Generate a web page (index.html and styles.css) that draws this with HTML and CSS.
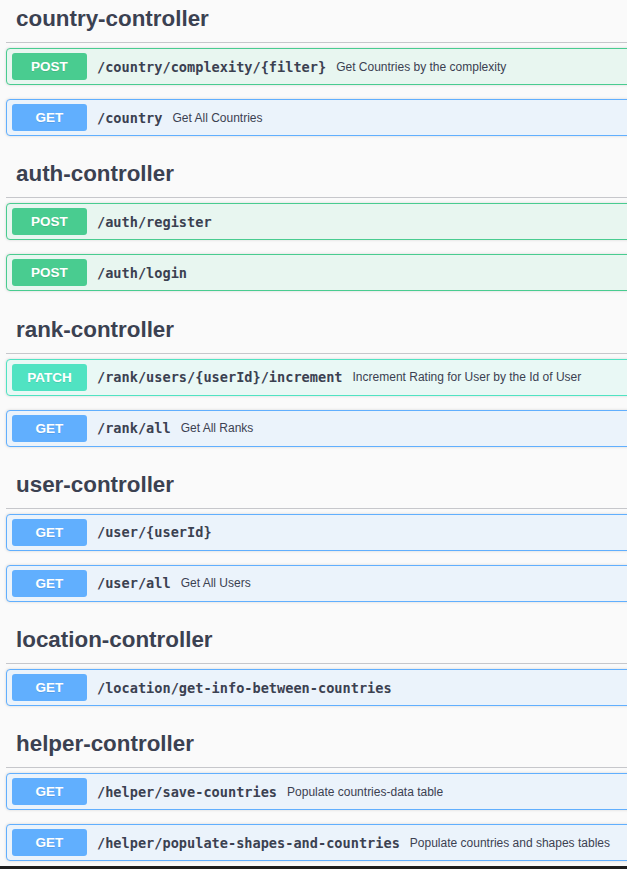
FILE: index.html
```html
<!DOCTYPE html>
<html lang="en">
<head>
<meta charset="utf-8">
<title>Swagger UI</title>
<link rel="stylesheet" href="styles.css">
</head>
<body>
<div class="page">
  <section class="tag">
    <h3 class="tag-title">country-controller</h3>
    <div class="op op-post"><span class="method">POST</span><span class="path">/country/complexity/{filter}</span><span class="desc">Get Countries by the complexity</span></div>
    <div class="op op-get"><span class="method">GET</span><span class="path">/country</span><span class="desc">Get All Countries</span></div>
  </section>
  <section class="tag">
    <h3 class="tag-title">auth-controller</h3>
    <div class="op op-post"><span class="method">POST</span><span class="path">/auth/register</span></div>
    <div class="op op-post"><span class="method">POST</span><span class="path">/auth/login</span></div>
  </section>
  <section class="tag">
    <h3 class="tag-title">rank-controller</h3>
    <div class="op op-patch"><span class="method">PATCH</span><span class="path">/rank/users/{userId}/increment</span><span class="desc">Increment Rating for User by the Id of User</span></div>
    <div class="op op-get"><span class="method">GET</span><span class="path">/rank/all</span><span class="desc">Get All Ranks</span></div>
  </section>
  <section class="tag">
    <h3 class="tag-title">user-controller</h3>
    <div class="op op-get"><span class="method">GET</span><span class="path">/user/{userId}</span></div>
    <div class="op op-get"><span class="method">GET</span><span class="path">/user/all</span><span class="desc">Get All Users</span></div>
  </section>
  <section class="tag">
    <h3 class="tag-title">location-controller</h3>
    <div class="op op-get"><span class="method">GET</span><span class="path">/location/get-info-between-countries</span></div>
  </section>
  <section class="tag">
    <h3 class="tag-title">helper-controller</h3>
    <div class="op op-get"><span class="method">GET</span><span class="path">/helper/save-countries</span><span class="desc">Populate countries-data table</span></div>
    <div class="op op-get"><span class="method">GET</span><span class="path">/helper/populate-shapes-and-countries</span><span class="desc">Populate countries and shapes tables</span></div>
  </section>
</div>
<div class="screen-edge"></div>
</body>
</html>
```

FILE: styles.css
```css
html, body {
  margin: 0;
  padding: 0;
  background: #fafafa;
  overflow: hidden;
}
body {
  font-family: "Liberation Sans", Arial, sans-serif;
  color: #3b4151;
}
.page {
  padding-left: 6px;
  margin-right: -30px;
}
.tag-title {
  margin: 0 0 5px 0;
  padding: 11.3px 0 10px 10px;
  font-size: 22.4px;
  line-height: 26px;
  font-weight: bold;
  color: #3b4151;
  border-bottom: 1px solid #c6c7cb;
}
.tag:first-child .tag-title {
  padding-top: 6px;
}
.op {
  display: flex;
  align-items: center;
  height: 37px;
  box-sizing: border-box;
  padding: 4px 5px;
  margin-bottom: 14px;
  border: 1px solid;
  border-radius: 4px;
  box-shadow: 0 0 3px rgba(0, 0, 0, 0.15);
}
.method {
  flex: none;
  width: 75px;
  height: 27px;
  line-height: 27px;
  text-align: center;
  border-radius: 3px;
  color: #fff;
  font-size: 13.5px;
  font-weight: bold;
  text-shadow: 0 1px 0 rgba(0, 0, 0, 0.1);
}
.path {
  padding: 0 10px;
  font-family: "DejaVu Sans Mono", "Liberation Mono", monospace;
  font-size: 13.6px;
  font-weight: bold;
  color: #3b4151;
  white-space: nowrap;
}
.desc {
  font-size: 12px;
  color: #3b4151;
  white-space: nowrap;
}
.op-post {
  border-color: #49cc90;
  background: #e8f6f0;
}
.op-post .method {
  background: #49cc90;
}
.op-get {
  border-color: #61affe;
  background: #ebf3fb;
}
.op-get .method {
  background: #61affe;
}
.op-patch {
  border-color: #50e3c2;
  background: #e9f8f5;
}
.op-patch .method {
  background: #50e3c2;
}
.screen-edge {
  position: fixed;
  left: 0;
  right: 0;
  bottom: 0;
  height: 3px;
  background: #1e1e1e;
}
```
